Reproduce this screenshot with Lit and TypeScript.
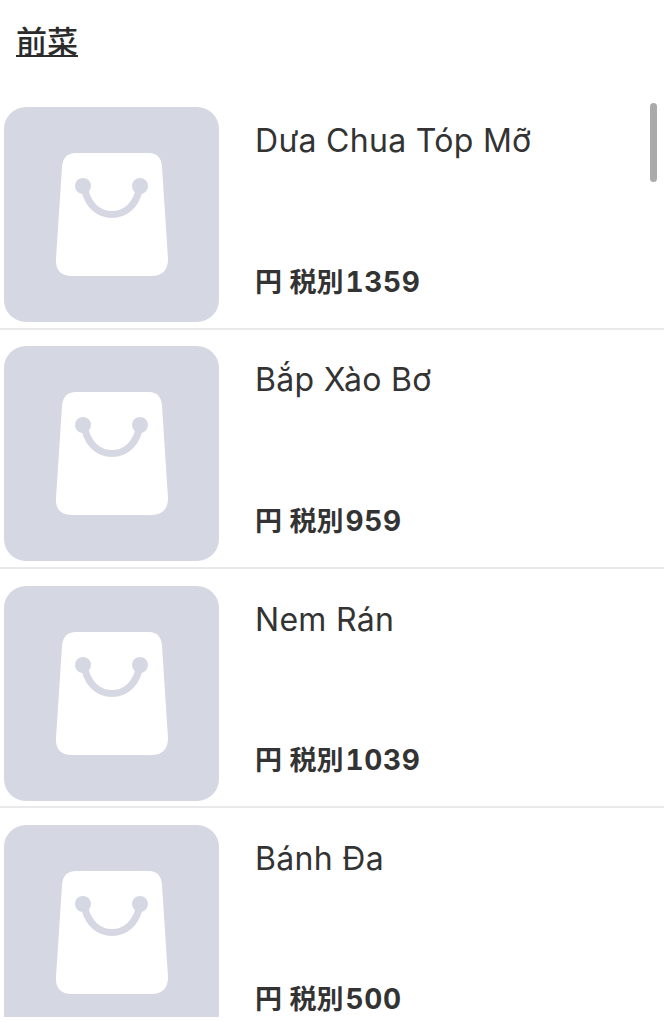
import { LitElement, html, css, svg } from "lit";
import { customElement } from "lit/decorators.js";

const items = [
  { name: "Dưa Chua Tóp Mỡ", price: 1359 },
  { name: "Bắp Xào Bơ", price: 959 },
  { name: "Nem Rán", price: 1039 },
  { name: "Bánh Đa", price: 500 },
];

const bag = svg`
  <rect width="215" height="215" rx="22" fill="#d5d7e3"/>
  <path d="M72 46H145Q157 46 158 60L164 152Q164 169 147 169H68Q51 169 52 152L58 60Q59 46 72 46Z" fill="#fff"/>
  <path d="M81 84C85 99 95 107.5 108 107.5C121 107.5 131 99 135 84" fill="none" stroke="#d5d7e3" stroke-width="7"/>
  <circle cx="79" cy="79" r="8" fill="#d5d7e3"/>
  <circle cx="136" cy="79" r="8" fill="#d5d7e3"/>
`;

@customElement("app-root")
export class AppRoot extends LitElement {
  static styles = css`
    :host {
      display: block;
      width: 666px;
      height: 1024px;
      background: #fff;
      overflow: hidden;
      font-family: Inter, "Noto Sans CJK JP", sans-serif;
      color: #333;
    }
    .title {
      margin: 0;
      padding: 20px 16px 0;
      height: 85px;
      box-sizing: border-box;
      font-size: 31px;
      line-height: 40px;
      font-weight: 500;
      color: #2b2b2b;
      font-family: "Noto Sans CJK JP", sans-serif;
      text-decoration: underline;
      text-underline-offset: 2px;
      text-decoration-thickness: 2px;
    }
    .list {
      position: relative;
      height: 932px;
      overflow: hidden;
      padding: 22px 2px 0 0;
      box-sizing: border-box;
    }
    .row {
      display: flex;
      gap: 36px;
      height: 222.5px;
      box-sizing: border-box;
      padding: 0 0 6px 4px;
      border-bottom: 2px solid #e9e9eb;
      margin-bottom: 16.83px;
    }
    .thumb {
      width: 215px;
      height: 215px;
      flex: none;
      display: block;
    }
    .info {
      display: flex;
      flex-direction: column;
      justify-content: space-between;
      padding: 14px 0 23px;
      min-width: 0;
    }
    .name {
      font-size: 32px;
      line-height: 40px;
      font-weight: 400;
      color: #333;
      letter-spacing: 0.3px;
    }
    .price {
      font-size: 27px;
      line-height: 32px;
      font-weight: 700;
      color: #333;
      word-spacing: 1px;
    }
    .num {
      font-size: 28px;
      letter-spacing: 0.7px;
      margin-left: 2px;
      font-variant-numeric: tabular-nums;
    }
    .scrollbar {
      position: absolute;
      left: 650px;
      top: 18px;
      width: 7px;
      height: 79px;
      border-radius: 4px;
      background: #aaa;
    }
  `;

  render() {
    return html`
      <h1 class="title">前菜</h1>
      <div class="list">
        ${items.map(
          (i) => html`
            <div class="row">
              <svg class="thumb" viewBox="0 0 215 215">${bag}</svg>
              <div class="info">
                <div class="name">${i.name}</div>
                <div class="price">円 税別<span class="num">${i.price}</span></div>
              </div>
            </div>
          `
        )}
        <div class="scrollbar"></div>
      </div>
    `;
  }
}
